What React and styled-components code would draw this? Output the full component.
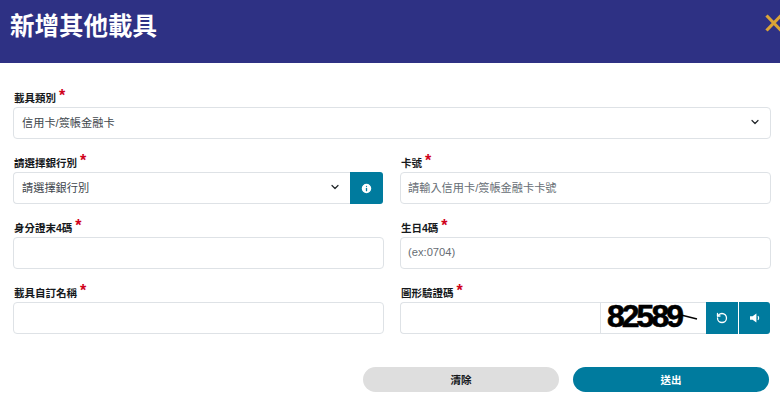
import React from 'react';
import styled, { createGlobalStyle } from 'styled-components';
import { ChevronDown, Info, RotateCcw } from 'lucide-react';

const GlobalStyle = createGlobalStyle`
  html, body {
    margin: 0;
    padding: 0;
    background: #fff;
    overflow: hidden;
  }
  * { box-sizing: border-box; }
  body {
    font-family: "Liberation Sans", "Noto Sans CJK TC", sans-serif;
    color: #212529;
  }
`;

const Page = styled.div`
  width: 780px;
  height: 408px;
  overflow: hidden;
`;

const Header = styled.header`
  height: 63px;
  background: #2e3184;
  display: flex;
  justify-content: space-between;
  padding: 9px 0 0 10px;
`;

const Title = styled.h1`
  margin: 0;
  font-size: 24.5px;
  line-height: 36px;
  font-weight: 700;
  color: #fff;
`;

const Close = styled.button`
  border: 0;
  padding: 0;
  background: none;
  width: 15px;
  height: 18px;
  overflow: hidden;
  margin-top: 5px;
  display: block;
`;

const Form = styled.form`
  padding: 25px 9px 0 13px;
  display: grid;
  grid-template-columns: 371px 371px;
  column-gap: 16px;
`;

const Field = styled.div`
  grid-column: ${p => (p.$wide ? '1 / 3' : 'auto')};
  height: 65px;
`;

const Label = styled.label`
  display: flex;
  height: 19px;
  padding-left: 1px;
  align-items: center;
  font-size: 10.5px;
  font-weight: 700;
  color: #16191c;
`;

const Star = styled.span`
  color: #d0021b;
  font-size: 16px;
  font-weight: 700;
  margin-left: 3px;
  position: relative;
  top: -2px;
`;

const Group = styled.div`
  display: flex;
  height: 32px;
  padding-right: ${p => p.$inset || 0}px;
`;

const Box = styled.div`
  flex: 1;
  min-width: 0;
  height: 32px;
  display: flex;
  align-items: center;
  justify-content: space-between;
  padding: 0 9px 3px ${p => (p.$select ? '8px' : '7px')};
  background: #fff;
  border: 1px solid #dee2e6;
  border-radius: ${p => p.$radius || '4px'};
  font-size: 11.2px;
  color: ${p => (p.$placeholder ? '#666d74' : '#40464c')};
  ${p => (p.$flat ? 'border-right: 0;' : '')}
`;

const Captcha = styled.div`
  width: 106px;
  height: 32px;
  flex: none;
  border-top: 1px solid #dee2e6;
  border-bottom: 1px solid #dee2e6;
  border-left: 1px solid #dee2e6;
  display: flex;
  align-items: center;
  position: relative;
  padding: 0 0 4px 6px;
  font-size: 32px;
  font-weight: 700;
  letter-spacing: -3px;
  color: #000;
  -webkit-text-stroke: 0.6px #000;
`;

const CaptchaLine = styled.svg`
  position: absolute;
  left: 80px;
  top: 11px;
`;

const IconButton = styled.button`
  width: ${p => p.$w || 32}px;
  height: 32px;
  flex: none;
  border: 0;
  padding: 0;
  display: flex;
  align-items: center;
  justify-content: center;
  background: #007b9e;
  color: #fff;
  border-radius: ${p => p.$radius || '0'};
  margin-left: ${p => p.$gap || 0}px;
`;

const Actions = styled.div`
  display: flex;
  justify-content: flex-end;
  gap: 14px;
  padding-right: 11px;
  margin-top: 19px;
`;

const Pill = styled.button`
  width: 196px;
  height: 25px;
  border: 0;
  border-radius: 13px;
  font: 700 10.5px "Liberation Sans", "Noto Sans CJK TC", sans-serif;
  background: ${p => (p.$primary ? '#007b9e' : '#dedede')};
  color: ${p => (p.$primary ? '#fff' : '#16191c')};
`;

const Req = ({ children }) => (
  <Label>
    {children}
    <Star>*</Star>
  </Label>
);

export default function App() {
  return (
    <Page>
      <GlobalStyle />
      <Header>
        <Title>新增其他載具</Title>
        <Close aria-label="close">
          <svg width="15" height="18" viewBox="0 0 15 18">
            <path d="M1.5 1.5 L16 16.5 M16 1.5 L1.5 16.5" stroke="#dba437" strokeWidth="3.2" fill="none" />
          </svg>
        </Close>
      </Header>
      <Form>
        <Field $wide>
          <Req>載具類別</Req>
          <Group>
            <Box $select>
              信用卡/簽帳金融卡
              <ChevronDown size={12} color="#212529" strokeWidth={2.4} />
            </Box>
          </Group>
        </Field>
        <Field>
          <Req>請選擇銀行別</Req>
          <Group $inset={1}>
            <Box $select $radius="4px 0 0 4px" $flat>
              請選擇銀行別
              <ChevronDown size={12} color="#212529" strokeWidth={2.4} />
            </Box>
            <IconButton $w={33} $radius="0 3px 3px 0" type="button">
              <Info size={13} color="#fff" fill="#fff" stroke="#007b9e" strokeWidth={2.4} />
            </IconButton>
          </Group>
        </Field>
        <Field>
          <Req>卡號</Req>
          <Group>
            <Box $placeholder>請輸入信用卡/簽帳金融卡卡號</Box>
          </Group>
        </Field>
        <Field>
          <Req>身分證末4碼</Req>
          <Group>
            <Box />
          </Group>
        </Field>
        <Field>
          <Req>生日4碼</Req>
          <Group>
            <Box $placeholder>(ex:0704)</Box>
          </Group>
        </Field>
        <Field>
          <Req>載具自訂名稱</Req>
          <Group>
            <Box />
          </Group>
        </Field>
        <Field>
          <Req>圖形驗證碼</Req>
          <Group $inset={1}>
            <Box $radius="4px 0 0 4px" $flat />
            <Captcha>
              82589
              <CaptchaLine width="18" height="8" viewBox="0 0 18 8">
                <path d="M0 1 L16 5" stroke="#000" strokeWidth="1.4" />
              </CaptchaLine>
            </Captcha>
            <IconButton type="button">
              <RotateCcw size={12} strokeWidth={2.6} />
            </IconButton>
            <IconButton $w={31} $gap={1} $radius="0 3px 3px 0" type="button">
              <svg width="12" height="12" viewBox="0 0 12 12">
                <path d="M1 4.2 H3.6 L7.4 1.4 V10.6 L3.6 7.8 H1 Z" fill="#fff" />
                <path d="M9 4.2 Q10.4 6 9 7.8" stroke="#fff" strokeWidth="1.2" fill="none" />
              </svg>
            </IconButton>
          </Group>
        </Field>
      </Form>
      <Actions>
        <Pill type="button">清除</Pill>
        <Pill $primary type="button">送出</Pill>
      </Actions>
    </Page>
  );
}
